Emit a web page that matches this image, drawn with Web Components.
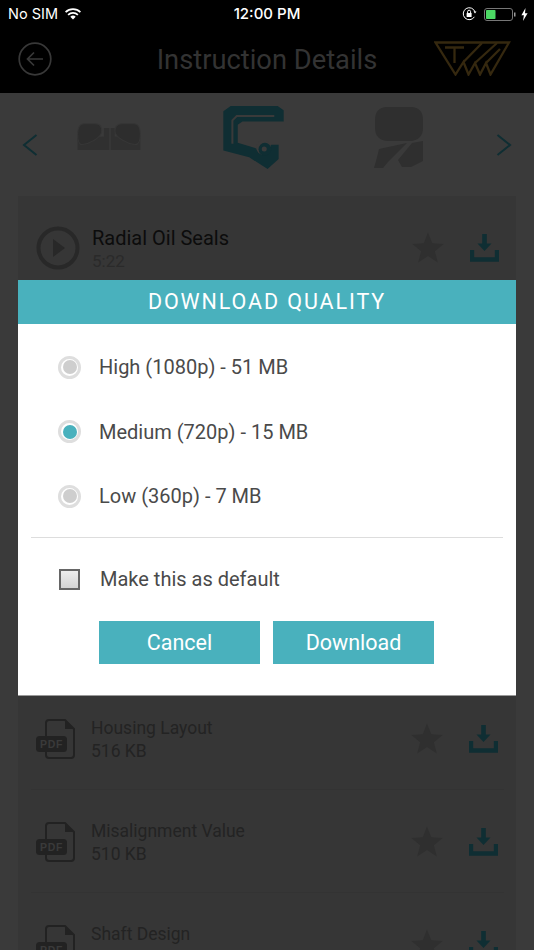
<!DOCTYPE html>
<html><head><meta charset="utf-8">
<style>
html,body{margin:0;padding:0;background:#3a3a3a}
body{width:534px;height:950px;overflow:hidden;position:relative;font-family:Roboto,"Liberation Sans",sans-serif}
</style></head><body>
<app-screen></app-screen>
<script>
const DL=`<svg width="29" height="29" viewBox="0 0 29 29"><path d="M12.2 1h4.6v9.5h4.7L14.5 18 7.500 10.500h4.700z" fill="#0f2e33"/><path d="M2 17v9.500h25V17" fill="none" stroke="#0f2e33" stroke-width="4.400"/></svg>`;
const STAR=`<svg width="32" height="31" viewBox="0 0 32 31"><path d="M16 .5l4.200 10.800 11.500.6-8.900 7.300 3 11.200L16 24.100 6.200 30.400l3-11.200L.3 11.900l11.500-.6z" fill="#2f2f2f"/></svg>`;
const def=(n,c)=>customElements.define(n,c);
class Base extends HTMLElement{
  constructor(){super();this.attachShadow({mode:'open'});}
  connectedCallback(){if(!this.shadowRoot.innerHTML)this.shadowRoot.innerHTML=this.html();}
}
def('status-bar',class extends Base{html(){return `<style>
:host{display:flex;align-items:center;height:28px;background:#000;color:#fff;font:400 14.500px/28px Inter,sans-serif;padding:0 6px 0 8px;position:relative}
.l{display:flex;align-items:center;gap:7px;flex:1}
.t{position:absolute;left:0;right:0;text-align:center;font-weight:500;font-size:15px}
.r{display:flex;align-items:center;gap:5px}
</style>
<div class="l"><span>No SIM</span>
<svg width="16" height="12" viewBox="0 0 16 12"><path d="M.6 4.200a10.500 10.500 0 0 1 14.800 0" fill="none" stroke="#fff" stroke-width="1.700"/><path d="M3.100 6.800a7 7 0 0 1 9.800 0" fill="none" stroke="#fff" stroke-width="1.700"/><path d="M8 11.500L5.300 8.800a3.900 3.900 0 0 1 5.400 0z" fill="#fff"/></svg></div>
<div class="t">12:00 PM</div>
<div class="r">
<svg width="16" height="14" viewBox="0 0 16 14"><path d="M12.400 9.800A6 6 0 1 1 13 5" fill="none" stroke="#fff" stroke-width="1"/><path d="M11.500 4.500h3l-1.500 2z" fill="#fff"/><rect x="4.600" y="6" width="5" height="4" fill="#fff" rx=".5"/><path d="M5.600 6V4.700a1.500 1.500 0 0 1 3 0V6" fill="none" stroke="#fff"/></svg>
<svg width="33" height="13" viewBox="0 0 33 13" style="margin-left:1px"><rect x=".5" y=".5" width="28" height="12" rx="2.500" fill="none" stroke="#777"/><rect x="2" y="2" width="9.500" height="9" rx=".8" fill="#4cd964"/><path d="M30 4.500h1.500v4H30z" fill="#999"/></svg>
<svg width="7" height="13" viewBox="0 0 7 13" style="margin-left:-1px"><path d="M4.500 0L.4 7.300h2.500L2 13l4.600-7.800H4z" fill="#fff"/></svg>
</div>`}});
def('nav-bar',class extends Base{html(){return `<style>
:host{display:flex;align-items:center;justify-content:space-between;box-sizing:border-box;height:65px;background:#000;padding:0 23px 4px 18px;position:relative}
h1{position:absolute;left:0;right:0;margin:0;text-align:center;font-weight:400;font-size:27.300px;line-height:1;color:#333;padding-top:4px}
svg{display:block;position:relative}
</style>
<svg width="34" height="34" viewBox="0 0 34 34"><circle cx="17" cy="17" r="15.800" fill="none" stroke="#383838" stroke-width="1.700"/><path d="M25 17H9.500M16 10.500L9.500 17l6.500 6.500" fill="none" stroke="#383838" stroke-width="1.700"/></svg>
<h1>Instruction Details</h1>
<svg width="77" height="35" viewBox="0 0 77 35" fill="none" stroke="#35280f" stroke-width="2.300"><path d="M1.500 1.500H75L56.500 33.500 52 22 46 33.500 41 22 34.500 33.500 29.500 21 21.500 33.500Z"/><path d="M29.500 21L48 2M41 22L63 2M52 22L66 8M11 6.500H30M20.500 6.500V22"/></svg>`}});
def('cat-carousel',class extends Base{html(){return `<style>
:host{display:flex;align-items:center;height:103px;padding:0 22px;box-sizing:border-box}
svg{display:block;flex:none}
</style>
<svg width="16" height="24" viewBox="0 0 16 24"><path d="M14.500 2L2 12l12.500 10" fill="none" stroke="#0f2e33" stroke-width="2"/></svg>
<svg style="margin:0 0 16px 39px" width="64" height="27" viewBox="50 85 190 80"><path d="M52 130V165H146V100H130V125ZM238 130V165H150V100H162V125Z" fill="#303030"/><path d="M70 87H105C120 87 125 98 123 112 121 128 90 146 65 149 55 149 52 135 52 118 52 100 58 87 70 87ZM220 87H183C168 87 161 98 163 112 165 128 198 146 222 149 234 149 238 135 238 118 238 100 232 87 220 87Z" fill="#2d2d2d" stroke="#363636" stroke-width="3"/></svg>
<svg style="margin:0 0 15px 82px" width="61" height="63" viewBox="488 32 180 188"><path fill="#0f2e33" d="M488 48L510 32H650L668 45V78H545L531 88V142L592 160L632 148H653V190L620 220L565 185L488 165Z"/><path d="M640 62H528L515 75V145" fill="none" stroke="#3a3a3a" stroke-width="6"/><circle cx="608" cy="156" r="22" fill="#3a3a3a"/><circle cx="612" cy="161" r="19" fill="#0f2e33"/><circle cx="610" cy="160" r="7.500" fill="#3a3a3a"/></svg>
<svg style="margin:0 0 15px 90px" width="50" height="61" viewBox="0 0 50 61"><path d="M13 0H37C45 0 49 5 49 13V21C49 29 44 34 36 34H14C6 34 1 29 1 21V13C1 5 5 0 13 0ZM3 50.500L0 61H9L14 55 33 36 5 42ZM24 53L38 36 49 34V54L37 60H28Z" fill="#2f2f2f"/></svg>
<svg style="margin:0 0 0 auto" width="16" height="24" viewBox="0 0 16 24"><path d="M1.500 2L14 12 1.500 22" fill="none" stroke="#0f2e33" stroke-width="2"/></svg>`}});
def('media-row',class extends Base{html(){
  const v=this.hasAttribute('video');
  const sub=this.getAttribute('sub');
  const icon=v?`<svg width="44" height="44" viewBox="0 0 44 44"><circle cx="22" cy="22" r="19.500" fill="none" stroke="#282828" stroke-width="4"/><path d="M17 13l12 9-12 9z" fill="#282828"/></svg>`
  :`<span class="pdf"><svg width="39" height="40" viewBox="0 0 39 40"><path d="M10 17V4a3 3 0 0 1 3-3h16l9 9v26a3 3 0 0 1-3 3H13a3 3 0 0 1-3-3v-3" fill="none" stroke="#222" stroke-width="2"/><path d="M29 1v9h9z" fill="#222"/><rect y="17" width="31" height="16" rx="3.500" fill="#222"/></svg><b>PDF</b></span>`;
  return `<style>
:host{display:flex;align-items:center;height:103px;box-sizing:border-box;margin:0 12px 0 13px;padding:${v?'0 5px 0 5px':'0 6px 0 5px'};border-bottom:1px solid ${v?'transparent':'#333'}}
.i{width:${v?'56px':'55px'};flex:none;display:flex;margin-top:${v?'0':'2px'}}
.pdf{position:relative;display:block;width:39px;height:40px}
.pdf svg{display:block}
b{position:absolute;left:0;width:31px;top:17px;text-align:center;font:700 10.500px/16px "Liberation Sans",sans-serif;color:#3a3a3a;letter-spacing:.6px}
.t{flex:1;min-height:46px;color:${v?'#0c0c0c':'#232323'};font-size:${v?20:17.500}px;line-height:23px;margin-top:4px}
.s{color:${v?'#2a2a2a':'#232323'};font-size:${v?17:17.500}px;line-height:23px}
.a{display:flex;align-items:center;gap:26px;margin-top:${v?'-2px':'0'}}
svg{display:block}
</style>
<div class="i">${icon}</div><div class="t"><div>${this.getAttribute('title')}</div>${sub?`<div class="s">${sub}</div>`:''}</div>
<div class="a">${STAR}${DL}</div>`}});
def('radio-option',class extends Base{html(){
  const on=this.hasAttribute('checked');
  return `<style>
:host{display:flex;align-items:center;height:64.500px;padding-left:40px;gap:18px;color:#4a4a4a;font-size:20px}
i{width:23px;height:23px;box-sizing:border-box;border-radius:50%;border:3px solid #dedede;display:flex;align-items:center;justify-content:center;flex:none}
i:after{content:"";width:14px;height:14px;border-radius:50%;background:${on?'#49b1bd':'#cecece'}}
</style><i></i><slot></slot>`}});
def('check-option',class extends Base{html(){return `<style>
:host{display:flex;align-items:center;height:83px;padding-left:41px;gap:20px;color:#4a4a4a;font-size:20px}
i{width:21px;height:21px;box-sizing:border-box;border:2px solid #666;background:linear-gradient(#eee,#d4d4d4);flex:none}
</style><i></i><slot></slot>`}});
def('action-button',class extends Base{html(){return `<style>
:host{display:flex;align-items:center;justify-content:center;width:161px;height:43px;background:#49b1bd;color:#fff;font-size:21.500px}
</style><slot></slot>`}});
def('quality-dialog',class extends Base{html(){return `<style>
:host{position:absolute;left:18px;top:280px;width:498px;height:415px;background:#fff;box-shadow:0 1px 0 #999;display:block}
header{height:44px;background:#49b1bd;color:#fff;text-align:center;font-size:21.500px;font-weight:400;line-height:44px;letter-spacing:1.900px}
.o{padding-top:11px}
hr{margin:8px 13px 0;border:0;border-top:1px solid #ddd}
.b{display:flex;gap:13px;padding-left:81px}
</style>
<header>DOWNLOAD QUALITY</header>
<div class="o"><radio-option>High (1080p) - 51 MB</radio-option><radio-option checked>Medium (720p) - 15 MB</radio-option><radio-option>Low (360p) - 7 MB</radio-option></div>
<hr><check-option>Make this as default</check-option>
<div class="b"><action-button>Cancel</action-button><action-button>Download</action-button></div>`}});
def('media-card',class extends Base{html(){return `<style>
:host{display:block;margin:0 18px;background:#363636;padding-top:1px;height:800px}
.gap{height:387px}
</style><slot name="first"></slot><div class="gap"></div><slot></slot>`}});
def('app-screen',class extends Base{html(){return `<style>
:host{display:block;height:950px;overflow:hidden;position:relative;color:#333}
</style>
<status-bar></status-bar><nav-bar></nav-bar><cat-carousel></cat-carousel>
<media-card>
<media-row slot="first" video title="Radial Oil Seals" sub="5:22"></media-row>
<media-row title="Housing Layout" sub="516 KB"></media-row>
<media-row title="Misalignment Value" sub="510 KB"></media-row>
<media-row title="Shaft Design"></media-row>
</media-card>
<quality-dialog></quality-dialog>`}});
</script>
</body></html>
